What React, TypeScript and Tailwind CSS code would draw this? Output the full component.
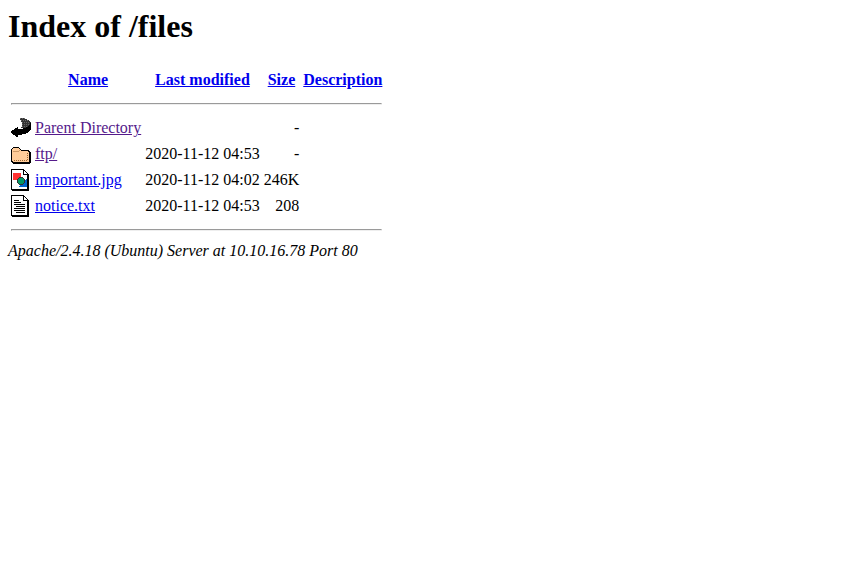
import type { ReactNode } from "react";

function Icon({ children }: { children?: ReactNode }) {
  return (
    <svg width="20" height="22" viewBox="0 0 20 22" shapeRendering="crispEdges" className="block">
      {children}
    </svg>
  );
}

function BackIcon() {
  return (
    <Icon>
      <path fill="#333" d="M9 1h5v1h2v1h2v1h1v1h1v5h-2v1h-8v-1h1V5h-1V3H9z" />
      <path
        stroke="#666"
        strokeDasharray="1 1"
        d="M9 1.5h5M10 3.5h7M11 5.5h8M11 7.5h7M11 9.5h5"
      />
      <path
        fill="#000"
        d="M19 6h1v7h-1v1h-1v1h-1v1h-2v1h-4v1H7v2H5v-1H4v-1H2v-1H1v-1H0v-2h1v-1h2v-1h1v-1h2v-1h1v2h5v-1h3v-1h2v-1h1V8h1z"
      />
    </Icon>
  );
}

function FolderIcon() {
  return (
    <Icon>
      <path fill="#000" d="M2 4h6v1h1v1h1v1h8v1h1v1h1v11h-1v1H2v-1H1v-1H0V6h1V5h1z" />
      <path fill="#fc9" d="M2 5h6v1h1v1h1v1h7v1h1v10H2v-1H1V6h1z" />
      <path fill="#c96" d="M2 8h6v1H2zM8 7h1v1H8z" />
      <path stroke="#963" strokeDasharray="1 1" d="M3 17.5h14M16.5 10v7" />
    </Icon>
  );
}

function Paper() {
  return (
    <>
      <path fill="#000" d="M0 0h13v1h1v1h1v1h1v1h1v1h1v17H1v-1H0z" />
      <path fill="#fff" d="M1 1h11v5h4v14H1z" />
      <path fill="#fff" d="M13 2h1v1h1v1h1v1h-3z" />
    </>
  );
}

function ImageIcon() {
  return (
    <Icon>
      <Paper />
      <path fill="#f33" d="M2 4h8v7H2z" />
      <path fill="#06c" d="M15 10h1v8H8v-1h1v-1h1v-1h1v-1h1v-1h1v-1h1v-1h1z" />
      <path fill="#333" d="M8 8h4v1h1v1h1v4h-1v1h-1v1H8v-1H7v-1H6v-4h1V9h1z" />
      <path fill="#096" d="M8 9h4v1h1v4h-1v1H8v-1H7v-4h1z" />
    </Icon>
  );
}

function TextIcon() {
  return (
    <Icon>
      <Paper />
      <path stroke="#000" d="M3 5.5h5M3 7.5h7M3 9.5h11M5 11.5h9M3 13.5h11M3 15.5h11M5 17.5h9" />
    </Icon>
  );
}

function Rule() {
  return (
    <tr>
      <th colSpan={5} className="p-px">
        <hr className="my-2 h-0.5 border border-t-[#9a9a9a] border-r-[#eee] border-b-[#eee] border-l-[#9a9a9a]" />
      </th>
    </tr>
  );
}

const rows = [
  { icon: <BackIcon />, name: "Parent Directory", date: "", size: "-", visited: true },
  { icon: <FolderIcon />, name: "ftp/", date: "2020-11-12 04:53", size: "-", visited: true },
  { icon: <ImageIcon />, name: "important.jpg", date: "2020-11-12 04:02", size: "246K", visited: false },
  { icon: <TextIcon />, name: "notice.txt", date: "2020-11-12 04:53", size: "208", visited: false },
];

export default function App() {
  return (
    <div className="p-2 font-['Liberation_Serif',serif] text-base leading-[18px] text-black">
      <h1 className="mb-[21.44px] text-[32px] leading-[37px] font-bold">Index of /files</h1>
      <table className="border-separate border-spacing-0.5">
        <tbody>
          <tr>
            <th className="p-px">
              <Icon />
            </th>
            {["Name", "Last modified", "Size", "Description"].map((label) => (
              <th key={label} className="p-px text-center font-bold whitespace-nowrap">
                <a href="#" className="text-[#0000ee] underline">{label}</a>
              </th>
            ))}
          </tr>
          <Rule />
          {rows.map((row) => (
            <tr key={row.name}>
              <td className="p-px">{row.icon}</td>
              <td className="p-px whitespace-nowrap">
                <a href="#" className={row.visited ? "text-[#551a8b] underline" : "text-[#0000ee] underline"}>
                  {row.name}
                </a>
              </td>
              <td className="p-px text-right whitespace-nowrap">{row.date}</td>
              <td className="p-px text-right">{row.size}</td>
              <td className="p-px" />
            </tr>
          ))}
          <Rule />
        </tbody>
      </table>
      <address className="italic">Apache/2.4.18 (Ubuntu) Server at 10.10.16.78 Port 80</address>
    </div>
  );
}
